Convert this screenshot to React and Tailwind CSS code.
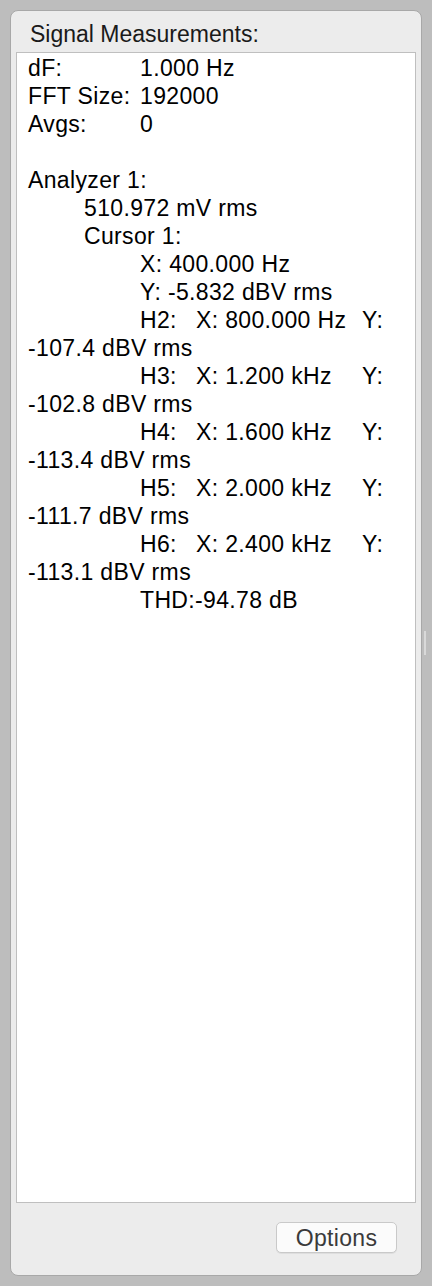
import React from "react";

const harmonics = [
  { name: "H2:", x: "X: 800.000 Hz", y: "-107.4 dBV rms" },
  { name: "H3:", x: "X: 1.200 kHz", y: "-102.8 dBV rms" },
  { name: "H4:", x: "X: 1.600 kHz", y: "-113.4 dBV rms" },
  { name: "H5:", x: "X: 2.000 kHz", y: "-111.7 dBV rms" },
  { name: "H6:", x: "X: 2.400 kHz", y: "-113.1 dBV rms" },
];

function Row({ label, value }) {
  return (
    <div className="flex whitespace-nowrap">
      <span className="w-[112px]">{label}</span>
      <span>{value}</span>
    </div>
  );
}

export default function App() {
  return (
    <div className="w-[432px] h-[1286px] bg-[#bdbdbd] p-[10px] font-['Liberation_Sans',Arial,sans-serif] text-[23px] leading-[28px] tracking-[0.35px]">
      <div className="relative h-full flex flex-col rounded-[8px] bg-[#ececec] border border-[#a8a8a8] px-[5px]">
        <div className="pt-[9px] pb-[4px] pl-[14px] text-[#1a1a1a] tracking-[0px]">
          Signal Measurements:
        </div>

        <div className="flex-1 bg-white border border-[#bfbfbf] pl-[11px] pt-[1px] text-black">
          <Row label="dF:" value="1.000 Hz" />
          <Row label="FFT Size:" value="192000" />
          <Row label="Avgs:" value="0" />
          <div className="h-[28px]" />
          <div>Analyzer 1:</div>
          <div className="pl-[56px]">510.972 mV rms</div>
          <div className="pl-[56px]">Cursor 1:</div>
          <div className="pl-[112px]">X: 400.000 Hz</div>
          <div className="pl-[112px]">Y: -5.832 dBV rms</div>
          {harmonics.map((h) => (
            <React.Fragment key={h.name}>
              <div className="flex pl-[112px] whitespace-nowrap">
                <span className="w-[56px]">{h.name}</span>
                <span className="w-[166px]">{h.x}</span>
                <span>Y:</span>
              </div>
              <div>{h.y}</div>
            </React.Fragment>
          ))}
          <div className="pl-[112px]">THD:-94.78 dB</div>
        </div>

        <div className="flex justify-end pt-[19px] pb-[22px] pr-[19px]">
          <button className="w-[121px] h-[31px] rounded-[5px] bg-[#fbfbfb] border border-[#c9c9c9] shadow-[0_1px_0_rgba(0,0,0,0.06)] text-[#3a3a3a] text-[23px] leading-[28px] tracking-[0.3px]">
            Options
          </button>
        </div>

        <div className="absolute right-[-5px] top-[620px] w-[2px] h-[24px] bg-[#d9d9d9]" />
      </div>
    </div>
  );
}
